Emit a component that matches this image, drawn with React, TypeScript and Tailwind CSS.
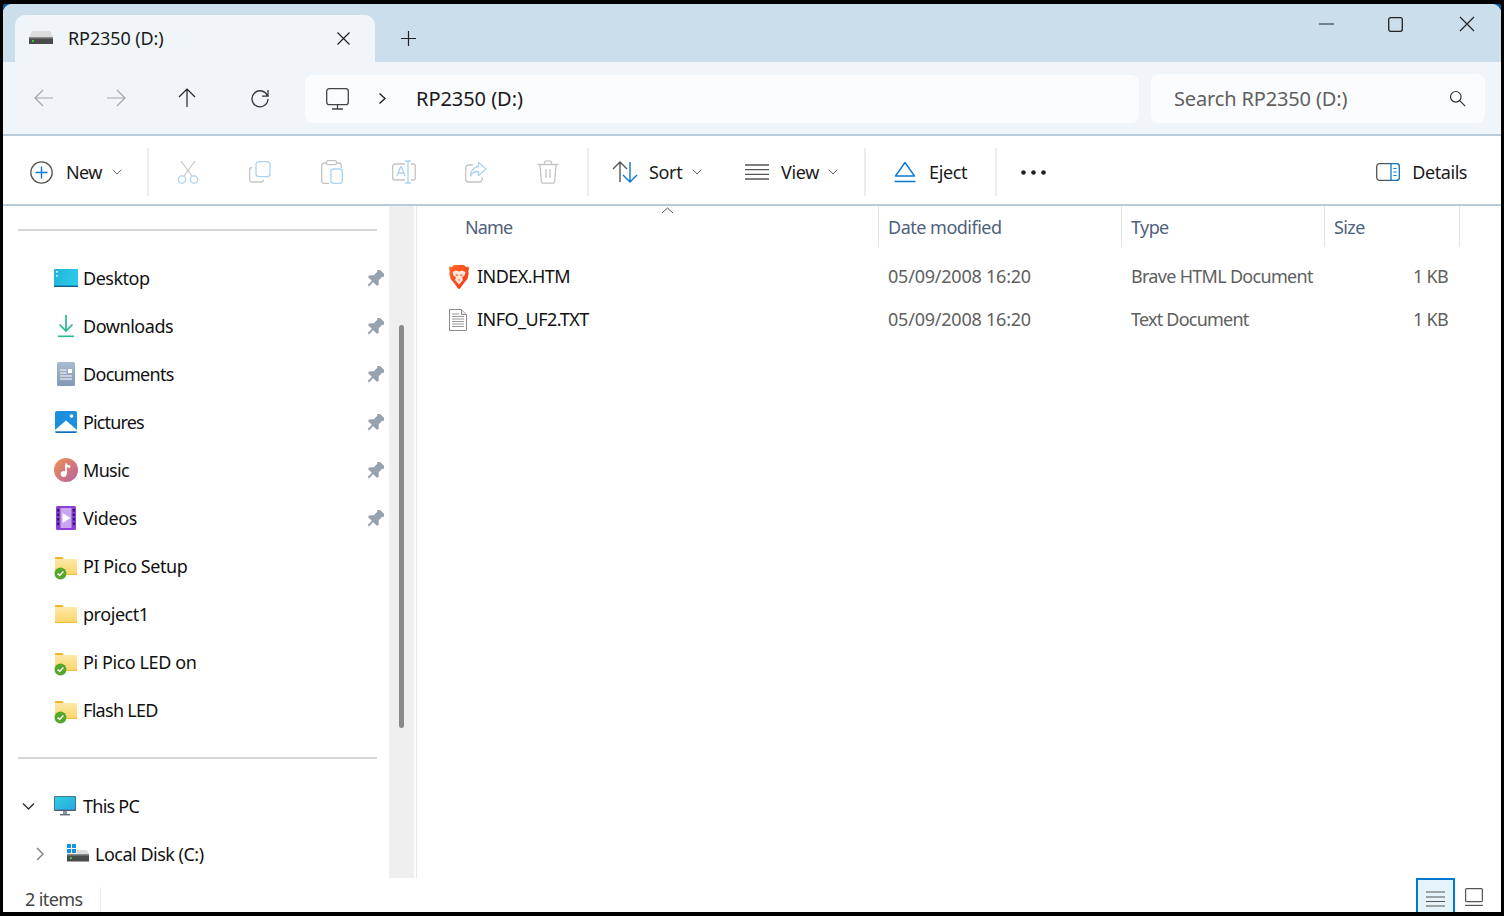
import React from "react";

const Chev = () => (
  <svg width="10" height="6" viewBox="0 0 10 6" fill="none" stroke="#6a6a6a" strokeWidth="1"><path d="M.7.7 5 5 9.300.7" /></svg>
);

const Drive = () => (
  <svg width="24" height="14" viewBox="0 0 24 14">
    <path d="M3 0h18l3 6v1H0V6z" fill="#dcdcdc" />
    <rect x="0" y="6" width="24" height="7" fill="#4a4a4a" />
    <rect x="0" y="6" width="24" height="1.5" fill="#8a8a8a" />
    <rect x="3" y="9" width="2" height="2" fill="#32d232" />
  </svg>
);

const Folder = ({ sync = false }: { sync?: boolean }) => (
  <div className="relative w-[24px] h-[24px]">
    <svg width="24" height="24" viewBox="0 0 24 24" className="absolute left-0 top-0">
      <defs>
        <linearGradient id="fg" x1="0" y1="0" x2="0" y2="1">
          <stop offset="0" stopColor="#fdeaa6" />
          <stop offset="1" stopColor="#fbd469" />
        </linearGradient>
      </defs>
      <path d="M1 3h7l2 2H1z" fill="#f5b324" />
      <rect x="1" y="5" width="22" height="16" fill="url(#fg)" />
      <rect x="1" y="20" width="22" height="1" fill="#f0b93a" />
    </svg>
    {sync && (
      <svg width="13" height="13" viewBox="0 0 13 13" className="absolute left-0 top-[13px]">
        <circle cx="6.5" cy="6.5" r="6" fill="#57a62c" />
        <path d="M3.6 6.6 5.6 8.6 9.4 4.6" fill="none" stroke="#fff" strokeWidth="1.4" />
      </svg>
    )}
  </div>
);

const DesktopIcon = () => (
  <svg width="24" height="18" viewBox="0 0 24 18">
    <defs>
      <linearGradient id="dk" x1="0" y1="0" x2="1" y2="0.3">
        <stop offset="0" stopColor="#1fb4d6" />
        <stop offset="1" stopColor="#2cc9ec" />
      </linearGradient>
    </defs>
    <rect width="24" height="18" rx="1" fill="url(#dk)" />
    <rect y="16.6" width="24" height="1.4" fill="#0f5f8c" />
    <rect x="2" y="2" width="1.6" height="1.6" fill="#fff" />
    <rect x="2" y="6" width="1.6" height="1.6" fill="#fff" />
  </svg>
);

const DownloadsIcon = () => (
  <svg width="18" height="24" viewBox="0 0 18 24" fill="none" stroke="#25b891" strokeWidth="1.7">
    <path d="M9 1v16M2.500 10.500 9 17l6.500-6.500" />
    <path d="M1 22.300h16" strokeWidth="1.6" />
  </svg>
);

const DocumentsIcon = () => (
  <svg width="18" height="24" viewBox="0 0 18 24">
    <defs>
      <linearGradient id="dc" x1="0" y1="0" x2="0" y2="1">
        <stop offset="0" stopColor="#a9bbd0" />
        <stop offset="1" stopColor="#8299b5" />
      </linearGradient>
    </defs>
    <rect width="18" height="24" rx="1.5" fill="url(#dc)" />
    <rect x="11" y="7" width="4" height="4" fill="#fff" />
    <path d="M3 8h6.500M3 11h6.500M3 14h12M3 17h12" stroke="#fff" strokeWidth="1" />
  </svg>
);

const PicturesIcon = () => (
  <svg width="22" height="22" viewBox="0 0 22 22">
    <rect width="22" height="22" rx="2" fill="#1c8fe0" />
    <circle cx="16.500" cy="5" r="1.800" fill="#fff" />
    <path d="M0 19 11 9.500 22 19v1.500H0z" fill="#fff" />
    <path d="M0 20.500h22V20a2 2 0 0 1-2 2H2a2 2 0 0 1-2-2z" fill="#0d6cbc" />
  </svg>
);

const MusicIcon = () => (
  <svg width="24" height="24" viewBox="0 0 24 24">
    <defs>
      <linearGradient id="mu" x1="0" y1="0" x2="1" y2="1">
        <stop offset="0" stopColor="#f0934e" />
        <stop offset="1" stopColor="#b85fa6" />
      </linearGradient>
    </defs>
    <circle cx="12" cy="12" r="12" fill="url(#mu)" />
    <path d="M12 5.500v10.200" stroke="#fff" strokeWidth="1.800" />
    <circle cx="9.600" cy="16" r="3" fill="#fff" />
    <path d="M12 5c.6 2 2.800 2.300 4.200 2.600V10c-1.700-.2-3.300-.6-4.200-2z" fill="#fff" />
  </svg>
);

const VideosIcon = () => (
  <svg width="20" height="24" viewBox="0 0 20 24">
    <rect width="20" height="24" rx="1.500" fill="#8b3fd9" />
    <rect x="4.500" y="2" width="11" height="20" fill="#c9a5f2" />
    <path d="M6.500 7v10l8-5z" fill="#fff" />
    {[3, 7.5, 12, 16.5].map((y) => (
      <g key={y}>
        <rect x="1.200" y={y} width="2" height="2.600" fill="#2b1850" />
        <rect x="16.800" y={y} width="2" height="2.600" fill="#2b1850" />
      </g>
    ))}
  </svg>
);

const ThisPCIcon = () => (
  <svg width="22" height="20" viewBox="0 0 22 20">
    <defs>
      <linearGradient id="pc" x1="0" y1="0" x2="1" y2="1">
        <stop offset="0" stopColor="#2fd0dd" />
        <stop offset="1" stopColor="#28a6e6" />
      </linearGradient>
    </defs>
    <rect width="22" height="15" rx="1" fill="#4b5a68" />
    <rect x="0.7" y="0.7" width="20.600" height="13" fill="url(#pc)" />
    <rect x="9" y="15" width="4" height="3" fill="#8a959e" />
    <rect x="6" y="18" width="10" height="1.400" fill="#5f6b75" />
  </svg>
);

const LocalDiskIcon = () => (
  <svg width="24" height="20" viewBox="0 0 24 20">
    <rect x="0" y="0" width="4" height="4" fill="#1a8fe3" />
    <rect x="5" y="0" width="4" height="4" fill="#1a8fe3" />
    <rect x="0" y="5" width="4" height="4" fill="#1a8fe3" />
    <rect x="5" y="5" width="4" height="4" fill="#1a8fe3" />
    <path d="M10 6h10l2 4H0v-.5h10z" fill="#dcdcdc" />
    <rect x="0" y="10" width="22" height="7.500" fill="#4a4a4a" />
    <rect x="0" y="10" width="22" height="1.500" fill="#8a8a8a" />
    <rect x="3" y="13" width="2" height="2" fill="#32d232" />
  </svg>
);

const Pin = () => (
  <svg width="18" height="18" viewBox="-1 -1 18 18" fill="#98a2ad">
    <g transform="rotate(45 8 8)">
      <path d="M3 -2h10v2l-1.500 1.200v5l3 3v2.300H1.500V9.200l3-3v-5L3 0z" />
      <rect x="7" y="11" width="2" height="6.500" />
    </g>
  </svg>
);

const BraveIcon = () => (
  <svg width="20" height="24" viewBox="0 0 20 24">
    <defs>
      <linearGradient id="br" x1="0" y1="0" x2="1" y2="1">
        <stop offset="0" stopColor="#ff6a2a" />
        <stop offset="1" stopColor="#f0330f" />
      </linearGradient>
    </defs>
    <path d="M5 0h10l2 2 2.500-.5.500 2.500-.8 2.200.5 2-1.200 5.500L15 18l-4 5.500-1 .5-1-.5L5 18 1.500 13.700.3 8.200l.5-2L0 4l.5-2.500L3 2z" fill="url(#br)" />
    <path d="M3.500 7 7 5.500l3 1 3-1L16.500 7l-1 3.500-2.500 2 1 2.500-4 4.500L6 15l1-2.500-2.500-2z" fill="#ffe9dc" />
    <path d="M6.500 9.500h2.500v1.200H6.500zM11 9.500h2.500v1.200H11zM8.800 14.500h2.400L10 16z" fill="#ff5a20" />
  </svg>
);

const TextIcon = () => (
  <svg width="18" height="22" viewBox="0 0 18 22" fill="none">
    <path d="M.5.5h12l5 5v16H.5z" fill="#fff" stroke="#8a8a8a" />
    <path d="M12.500.5v5h5" fill="#e8e8e8" stroke="#8a8a8a" />
    <path d="M3 5h7M3 7.500h12M3 10h12M3 12.500h12M3 15h12M3 17.500h12" stroke="#9a9a9a" />
  </svg>
);

const side: { label: string; icon: React.ReactNode; pin?: boolean; cls: string }[] = [
  { label: "Desktop", icon: <DesktopIcon />, pin: true, cls: "tracking-[-0.5px]" },
  { label: "Downloads", icon: <DownloadsIcon />, pin: true, cls: "tracking-[-0.45px]" },
  { label: "Documents", icon: <DocumentsIcon />, pin: true, cls: "tracking-[-0.7px]" },
  { label: "Pictures", icon: <PicturesIcon />, pin: true, cls: "tracking-[-0.85px]" },
  { label: "Music", icon: <MusicIcon />, pin: true, cls: "tracking-[-0.7px]" },
  { label: "Videos", icon: <VideosIcon />, pin: true, cls: "tracking-[-0.35px]" },
  { label: "PI Pico Setup", icon: <Folder sync />, cls: "tracking-[-0.45px]" },
  { label: "project1", icon: <Folder />, cls: "tracking-[-0.45px]" },
  { label: "Pi Pico LED on", icon: <Folder sync />, cls: "tracking-[-0.42px]" },
  { label: "Flash LED", icon: <Folder sync />, cls: "tracking-[-0.7px]" },
];

const ToolBtn = ({ children }: { children: React.ReactNode }) => (
  <div className="w-[72px] h-[48px] flex items-center justify-center shrink-0">{children}</div>
);

const Divider = () => <div className="w-[2px] h-[48px] bg-[#ececec] shrink-0" />;

const grey = "#c4c4c4";
const blue = "#a9d2f3";

const Row = ({ icon, name, type, nameCls, typeCls }: { icon: React.ReactNode; name: string; type: string; nameCls: string; typeCls: string }) => (
  <div className="flex items-center h-[43px] text-[18px]">
    <div className="w-[60px] pl-[32px] flex items-center shrink-0">{icon}</div>
    <div className={`w-[411px] text-[#111] shrink-0 ${nameCls}`}>{name}</div>
    <div className="w-[243px] text-[#606060] shrink-0 tracking-[-0.22px]">05/09/2008 16:20</div>
    <div className={`w-[270px] text-[#606060] shrink-0 ${typeCls}`}>{type}</div>
    <div className="w-[47px] text-[#606060] text-right shrink-0 tracking-[-0.7px]">1 KB</div>
  </div>
);

export default function App() {
  return (
    <div className="w-[1504px] h-[916px] bg-black pt-[4px] pb-[4px] pl-[3px] pr-[3px] overflow-hidden font-['Noto_Sans','Open_Sans',sans-serif] tracking-[-0.35px]">
      <div className="h-[908px] bg-[#0b5cab] rounded-t-[2px]">
        <div className="h-full flex flex-col bg-white rounded-t-[9px] overflow-hidden">
          {/* Title bar */}
          <div className="h-[58px] bg-[#cbdeeb] flex items-end shrink-0">
            <div className="ml-[12px] w-[360px] h-[47px] bg-[#f0f5f9] rounded-t-[10px] flex items-center shrink-0 pb-[1px]">
              <div className="ml-[14px] w-[39px] shrink-0"><Drive /></div>
              <span className="text-[18px] text-[#1a1a1a] tracking-[-0.1px]">RP2350 (D:)</span>
              <svg className="ml-auto mr-[24px]" width="15" height="15" viewBox="0 0 15 15" stroke="#222" strokeWidth="1.2"><path d="M1.500 1.500l12 12M13.500 1.500l-12 12" /></svg>
            </div>
            <div className="ml-[26px] mb-[16px] shrink-0">
              <svg width="15" height="15" viewBox="0 0 15 15" stroke="#222" strokeWidth="1.2"><path d="M7.500 0v15M0 7.500h15" /></svg>
            </div>
            <div className="ml-auto self-start mt-[12px] flex items-center shrink-0 mr-[26px]">
              <svg width="15" height="16" viewBox="0 0 15 16" stroke="#222" strokeWidth="1.2"><path d="M0 8h15" /></svg>
              <svg className="ml-[54px]" width="15" height="15" viewBox="0 0 15 15" fill="none" stroke="#222" strokeWidth="1.3"><rect x=".7" y=".7" width="13.600" height="13.600" rx="2" /></svg>
              <svg className="ml-[56px]" width="16" height="16" viewBox="0 0 16 16" stroke="#222" strokeWidth="1.2"><path d="M1 1l14 14M15 1 1 15" /></svg>
            </div>
          </div>

          {/* Nav bar */}
          <div className="h-[72px] bg-[#f0f5f9] flex items-center shrink-0">
            <div className="w-[302px] flex items-center shrink-0 pl-[5px]">
              <div className="w-[72px] flex justify-center">
                <svg width="20" height="18" viewBox="0 0 20 18" fill="none" stroke="#a3a7ab" strokeWidth="1.2"><path d="M19 9H1M9 1 1 9l8 8" /></svg>
              </div>
              <div className="w-[72px] flex justify-center">
                <svg width="20" height="18" viewBox="0 0 20 18" fill="none" stroke="#a3a7ab" strokeWidth="1.2"><path d="M1 9h18M11 1l8 8-8 8" /></svg>
              </div>
              <div className="w-[70px] flex justify-center">
                <svg width="18" height="20" viewBox="0 0 18 20" fill="none" stroke="#222" strokeWidth="1.2"><path d="M9 19V1M1 9l8-8 8 8" /></svg>
              </div>
              <div className="w-[76px] flex justify-center">
                <svg width="20" height="20" viewBox="0 0 20 20" fill="none" stroke="#333" strokeWidth="1.3"><path d="M17.500 8A8 8 0 1 0 18 11M18 2v6.200h-6" /></svg>
              </div>
            </div>
            <div className="w-[834px] h-[48px] mt-[1px] bg-[#fbfcfe] rounded-[8px] flex items-center shrink-0">
              <svg className="ml-[21px]" width="23" height="22" viewBox="0 0 23 22" fill="none" stroke="#444" strokeWidth="1.300"><rect x=".7" y=".7" width="21.600" height="16" rx="2.500" /><path d="M11.500 17v4M6 21h11" /></svg>
              <svg className="ml-[29px]" width="9" height="13" viewBox="0 0 9 13" fill="none" stroke="#222" strokeWidth="1.4"><path d="M1.500 1.500 7 6.500l-5.500 5" /></svg>
              <span className="ml-[29px] mt-[1px] text-[20px] text-[#1a1a1a] tracking-[-0.05px]">RP2350 (D:)</span>
            </div>
            <div className="ml-[12px] w-[334px] h-[49px] mt-[1px] bg-[#fbfcfe] rounded-[8px] flex items-center shrink-0 pl-[23px]">
              <span className="text-[20px] mt-[1px] text-[#5f5f5f] tracking-[-0.15px]">Search RP2350 (D:)</span>
              <svg className="ml-auto mr-[19px]" width="17" height="17" viewBox="0 0 17 17" fill="none" stroke="#333" strokeWidth="1.200"><circle cx="6.800" cy="6.800" r="5.300" /><path d="M10.700 10.700l5.500 5.500" /></svg>
            </div>
          </div>
          <div className="h-[2px] bg-[#b9cbd8] shrink-0" />

          {/* Toolbar */}
          <div className="h-[68px] pt-[4px] bg-white flex items-center shrink-0 text-[18px] text-[#1a1a1a]">
            <svg className="ml-[27px] shrink-0" width="23" height="23" viewBox="0 0 23 23" fill="none"><circle cx="11.500" cy="11.500" r="10.700" stroke="#555" strokeWidth="1.300" /><path d="M11.500 5.500v12M5.500 11.500h12" stroke="#0a7ad1" strokeWidth="1.400" /></svg>
            <span className="ml-[13px] w-[46px] tracking-[-0.6px]">New</span>
            <Chev />
            <div className="ml-[25px]"><Divider /></div>
            <div className="flex ml-[3px]">
              <ToolBtn>
                <svg width="22" height="24" viewBox="0 0 22 24" fill="none"><path d="M4 1l11 15M18 1 7 16" stroke={grey} strokeWidth="1.200" /><circle cx="5" cy="19.500" r="3.700" stroke={blue} strokeWidth="1.300" /><circle cx="17" cy="19.500" r="3.700" stroke={blue} strokeWidth="1.300" /></svg>
              </ToolBtn>
              <ToolBtn>
                <svg width="22" height="22" viewBox="0 0 22 22" fill="none"><path d="M3 6.500a2.500 2.500 0 0 0-2.300 2.500v9.500A2.500 2.500 0 0 0 3.200 21h8.800a2.500 2.500 0 0 0 2.500-2.300" stroke={grey} strokeWidth="1.300" /><rect x="7" y=".7" width="14" height="15" rx="3" stroke={blue} strokeWidth="1.300" /></svg>
              </ToolBtn>
              <ToolBtn>
                <svg width="22" height="24" viewBox="0 0 22 24" fill="none"><path d="M5 3H3A2.300 2.300 0 0 0 .7 5.300V21a2.300 2.300 0 0 0 2.300 2.300h5M16 3h2a2.300 2.300 0 0 1 2.300 2.300V8" stroke={grey} strokeWidth="1.300" /><rect x="5.500" y=".7" width="10" height="4" rx="1.500" stroke={grey} strokeWidth="1.300" /><rect x="10" y="9" width="11.300" height="14.300" rx="2.500" stroke={blue} strokeWidth="1.300" /></svg>
              </ToolBtn>
              <ToolBtn>
                <svg width="24" height="24" viewBox="0 0 24 24" fill="none"><path d="M13 4H3a2.300 2.300 0 0 0-2.300 2.300v11.400A2.300 2.300 0 0 0 3 20h10M19 4h2a2.300 2.300 0 0 1 2.300 2.300v11.400A2.300 2.300 0 0 1 21 20h-2" stroke={grey} strokeWidth="1.300" /><path d="M13 1h6M13 23h6M16 1v22M5 16l3.500-9h1l3.500 9M6.200 13h5.600" stroke={blue} strokeWidth="1.300" /></svg>
              </ToolBtn>
              <ToolBtn>
                <svg width="22" height="22" viewBox="0 0 22 22" fill="none"><path d="M8 4H3.500A2.800 2.800 0 0 0 .7 6.800v11.400A2.800 2.800 0 0 0 3.500 21h11a2.800 2.800 0 0 0 2.800-2.800V16" stroke={grey} strokeWidth="1.300" /><path d="M13.500 1.500 21 8l-7.500 6.500v-4C9.500 10.500 7 12 5.500 15c0-5 3-9 8-9.500z" stroke={blue} strokeWidth="1.300" strokeLinejoin="round" /></svg>
              </ToolBtn>
              <ToolBtn>
                <svg width="22" height="24" viewBox="0 0 22 24" fill="none" stroke={grey} strokeWidth="1.300"><path d="M.5 4.500h21M7.500 4.500V3A2.300 2.300 0 0 1 9.800.8h2.400A2.300 2.300 0 0 1 14.500 3v1.500M3 4.500l1.300 16.500a2.300 2.300 0 0 0 2.300 2.200h8.800a2.300 2.300 0 0 0 2.300-2.200L19 4.500M9 9v9M13 9v9" /></svg>
              </ToolBtn>
            </div>
            <div className="ml-[3px]"><Divider /></div>
            <svg className="ml-[23px] shrink-0" width="26" height="22" viewBox="0 0 26 22" fill="none" strokeWidth="1.400"><path d="M8 21V1M1 8l7-7 7 7" stroke="#555" /><path d="M18 1v20M11 14l7 7 7-7" stroke="#0a7ad1" /></svg>
            <span className="ml-[11px] w-[43px]">Sort</span>
            <Chev />
            <svg className="ml-[43px] shrink-0" width="24" height="16" viewBox="0 0 24 16" stroke="#555" strokeWidth="1.300"><path d="M0 1h24M0 5.700h24M0 10.300h24M0 15h24" /></svg>
            <span className="ml-[12px] w-[47px]">View</span>
            <Chev />
            <div className="ml-[26px]"><Divider /></div>
            <svg className="ml-[28px] shrink-0" width="22" height="22" viewBox="0 0 22 22" fill="none" stroke="#0a7ad1" strokeWidth="1.400"><path d="M11 1.500 20.500 15h-19zM.5 20.500h21" strokeLinejoin="round" /></svg>
            <span className="ml-[13px] w-[54px]">Eject</span>
            <div className="ml-[12px]"><Divider /></div>
            <svg className="ml-[24px] shrink-0" width="25" height="5" viewBox="0 0 25 5" fill="#222"><circle cx="2.500" cy="2.500" r="2.300" /><circle cx="12.500" cy="2.500" r="2.300" /><circle cx="22.500" cy="2.500" r="2.300" /></svg>
            <svg className="ml-auto shrink-0" width="24" height="18" viewBox="0 0 24 18" fill="none"><rect x=".7" y=".7" width="22.600" height="16.600" rx="3" stroke="#555" strokeWidth="1.300" /><path d="M15 .7h5.300a3 3 0 0 1 3 3v10.600a3 3 0 0 1-3 3H15z" fill="#fff" stroke="#0a7ad1" strokeWidth="1.300" /><path d="M17.500 5.500h3M17.500 9h3M17.500 12.500h3" stroke="#0a7ad1" /></svg>
            <span className="ml-[12px] mr-[34px] tracking-[-0.45px]">Details</span>
          </div>
          <div className="h-[2px] bg-[#b9cbd8] shrink-0" />

          {/* Body */}
          <div className="flex flex-1 min-h-0">
            <div className="w-[386px] shrink-0 overflow-hidden pt-[23px] text-[18px] text-[#111]">
              <div className="ml-[15px] w-[359px] h-[2px] bg-[#d6d6d6]" />
              <div className="mt-[23px]">
                {side.map((s) => (
                  <div key={s.label} className="h-[48px] flex items-center">
                    <div className="w-[80px] pl-[50px] flex justify-start shrink-0">
                      <div className="w-[26px] flex justify-center">{s.icon}</div>
                    </div>
                    <span className={s.cls}>{s.label}</span>
                    {s.pin && <div className="ml-auto mr-[5px] mt-[1px]"><Pin /></div>}
                  </div>
                ))}
              </div>
              <div className="mt-[23px] ml-[15px] w-[359px] h-[2px] bg-[#d6d6d6]" />
              <div className="mt-[23px]">
                <div className="h-[48px] flex items-center">
                  <svg className="ml-[19px]" width="13" height="9" viewBox="0 0 13 9" fill="none" stroke="#333" strokeWidth="1.500"><path d="M1 1.500 6.500 7 12 1.500" /></svg>
                  <div className="ml-[19px] w-[29px]"><ThisPCIcon /></div>
                  <span className="tracking-[-0.75px]">This PC</span>
                </div>
                <div className="h-[48px] flex items-center">
                  <svg className="ml-[33px]" width="9" height="14" viewBox="0 0 9 14" fill="none" stroke="#888" strokeWidth="1.500"><path d="M1 1l6 6-6 6" /></svg>
                  <div className="ml-[22px] w-[28px]"><LocalDiskIcon /></div>
                  <span className="tracking-[-0.5px]">Local Disk (C:)</span>
                </div>
              </div>
            </div>

            {/* Scrollbar */}
            <div className="w-[25px] bg-[#efefef] shrink-0 pt-[119px] flex justify-center">
              <div className="w-[5px] h-[403px] bg-[#8a8a8a] rounded-full" />
            </div>
            <div className="w-[3px] shrink-0 border-r border-[#e8e8e8]" />

            {/* Files */}
            <div className="flex-1 min-w-0 relative">
              <svg className="absolute left-[244px] top-[1px]" width="13" height="7" viewBox="0 0 13 7" fill="none" stroke="#555"><path d="M1 6l5.500-5 5.500 5" /></svg>
              <div className="flex h-[41px] text-[18px] text-[#4f617c]">
                <div className="w-[462px] pl-[48px] pt-[8px] shrink-0 border-r border-[#e3e3e3] tracking-[-0.9px]">Name</div>
                <div className="w-[243px] pl-[9px] pt-[8px] shrink-0 border-r border-[#e3e3e3] tracking-[-0.5px]">Date modified</div>
                <div className="w-[203px] pl-[9px] pt-[8px] shrink-0 border-r border-[#e3e3e3] tracking-[-0.6px]">Type</div>
                <div className="w-[135px] pl-[9px] pt-[8px] shrink-0 border-r border-[#e3e3e3] tracking-[-0.6px]">Size</div>
              </div>
              <div className="mt-[8px]">
                <Row icon={<BraveIcon />} name="INDEX.HTM" type="Brave HTML Document" nameCls="tracking-[-0.55px]" typeCls="tracking-[-0.7px]" />
                <Row icon={<TextIcon />} name="INFO_UF2.TXT" type="Text Document" nameCls="tracking-[-0.52px]" typeCls="tracking-[-0.78px]" />
              </div>
            </div>
          </div>

          {/* Status bar */}
          <div className="h-[34px] bg-white flex items-start shrink-0 text-[18px] text-[#444]">
            <span className="ml-[22px] w-[75px] mt-[8px] tracking-[-0.6px]">2 items</span>
            <div className="w-px h-[25px] mt-[9px] bg-[#ececec]" />
            <div className="ml-auto flex h-full items-stretch mr-[18px]">
              <div className="w-[39px] bg-[#e5f3fb] border-2 border-[#0078d4] border-b-0 pt-[11px] flex justify-center">
                <svg width="19" height="16" viewBox="0 0 19 16" stroke="#555" strokeWidth="1.200"><path d="M0 1h19M0 6h19M0 10.500h19M0 15h19" /></svg>
              </div>
              <div className="ml-[10px] pt-[10px]">
                <svg width="18" height="18" viewBox="0 0 18 18" fill="none" stroke="#555" strokeWidth="1.200"><rect x=".6" y=".6" width="16.800" height="13" rx="1" /><path d="M0 17.400h18" /></svg>
              </div>
            </div>
          </div>
        </div>
      </div>
    </div>
  );
}
